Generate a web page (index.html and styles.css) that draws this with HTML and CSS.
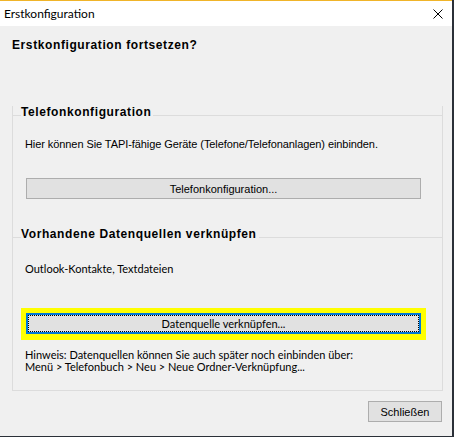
FILE: index.html
```html
<!DOCTYPE html>
<html lang="de">
<head>
  <meta charset="UTF-8">
  <title>Erstkonfiguration</title>
  <link rel="stylesheet" href="styles.css">
</head>
<body>
  <div class="window">
    <div class="titlebar">
      <span class="title">Erstkonfiguration</span>
      <svg class="close" width="10" height="10" viewBox="0 0 10 10">
        <path d="M0.5 0.5L9.5 9.5M9.5 0.5L0.5 9.5" stroke="#000" stroke-width="1" fill="none"/>
      </svg>
    </div>
    <div class="dlg-body">
      <h1 class="question">Erstkonfiguration fortsetzen?</h1>
      <div class="group">
        <div class="group-head"><span>Telefonkonfiguration</span></div>
        <p class="desc">Hier können Sie TAPI-fähige Geräte (Telefone/Telefonanlagen) einbinden.</p>
        <button class="btn btn-wide">Telefonkonfiguration...</button>
        <div class="group-head group-head-2"><span>Vorhandene Datenquellen verknüpfen</span></div>
        <p class="desc desc-ui">Outlook-Kontakte, Textdateien</p>
        <div class="highlight">
          <button class="btn btn-focus">Datenquelle verknüpfen...</button>
        </div>
        <p class="hint">Hinweis: Datenquellen können Sie auch später noch einbinden über:<br>Menü &gt; Telefonbuch &gt; Neu &gt; Neue Ordner-Verknüpfung...</p>
      </div>
      <div class="footer">
        <button class="btn btn-close">Schließen</button>
      </div>
    </div>
  </div>
</body>
</html>
```

FILE: styles.css
```css
body {
  margin: 0;
  background: #2b3038;
  width: 454px;
  height: 437px;
  overflow: hidden;
}
.window {
  width: 452px;
  height: 436px;
  background: #f0f0f0;
  display: flex;
  flex-direction: column;
  font-family: 'Liberation Sans', Arial, sans-serif;
  font-size: 11px;
  color: #000;
}
.titlebar {
  height: 25px;
  border-top: 1px solid #f0b429;
  background: #fff;
  display: flex;
  align-items: center;
  justify-content: space-between;
  padding: 0 9px 0 4px;
}
.title {
  font-family: Lato, 'Noto Sans', sans-serif;
  font-size: 12px;
  line-height: 16px;
}
.close { display: block; }

.dlg-body {
  padding: 0 9px 0 12px;
}
.question {
  margin: 13px 0 0 0;
  font-size: 12px;
  line-height: 13px;
  font-weight: 700;
  letter-spacing: 0.6px;
}
.group {
  margin-top: 54px;
  border: 1px solid #dcdcdc;
  border-top: none;
  padding-bottom: 17px;
}
.group-head {
  display: flex;
  align-items: flex-start;
  margin: 0 -1px;
  font-size: 12px;
  font-weight: 700;
  line-height: 13px;
  letter-spacing: 0.6px;
}
.group-head::before,
.group-head::after {
  content: '';
  height: 9px;
  border-bottom: 1px solid #dcdcdc;
}
.group-head::before { width: 9px; }
.group-head::after { flex: 1; }
.group-head span { padding-right: 2px; }
.group-head-2 { margin-top: 29px; }

.desc {
  margin: 19px 0 0 12px;
  line-height: 13px;
  letter-spacing: -0.08px;
}
.desc-ui {
  margin-top: 21px;
  font-family: Lato, 'Noto Sans', sans-serif;
  letter-spacing: 0;
}
.btn {
  display: block;
  box-sizing: border-box;
  height: 21px;
  padding: 0;
  background: #e1e1e1;
  border: 1px solid #adadad;
  font-family: 'Liberation Sans', Arial, sans-serif;
  font-size: 11px;
  color: #000;
  text-align: center;
}
.btn-wide {
  width: 395px;
  margin: 27px 0 0 13px;
}
.highlight {
  width: 395px;
  margin: 33px 0 0 8px;
  border: 5px solid #ffff00;
  border-bottom-width: 6px;
}
.btn-focus {
  position: relative;
  width: 395px;
  border: 2px solid #0078d7;
  font-family: Lato, 'Noto Sans', sans-serif;
}
.btn-focus::after {
  content: '';
  position: absolute;
  inset: 0;
  border: 1px dotted #000;
}
.hint {
  margin: 9px 0 0 12px;
  font-family: Lato, 'Noto Sans', sans-serif;
  line-height: 12px;
}
.footer {
  display: flex;
  justify-content: flex-end;
  margin-top: 10px;
}
.btn-close {
  width: 74px;
  margin-right: 1px;
}
```
